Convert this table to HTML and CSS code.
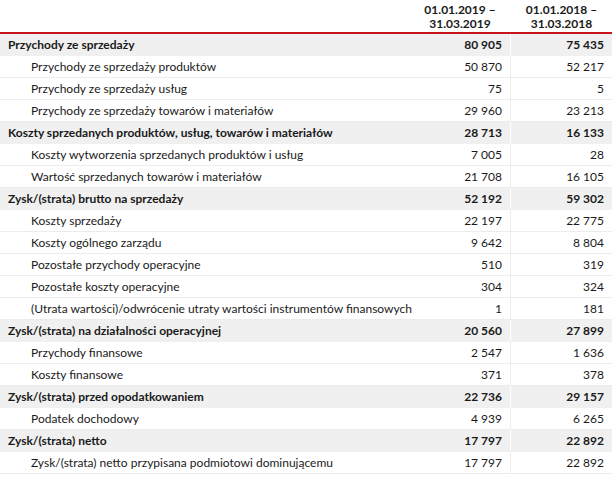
FILE: index.html
```html
<!DOCTYPE html>
<html lang="pl">
<head>
<meta charset="utf-8">
<link rel="stylesheet" href="styles.css">
</head>
<body>
<div class="table">
  <div class="row head">
    <div class="cell label"></div>
    <div class="cell num">01.01.2019 –<br>31.03.2019</div>
    <div class="cell num last">01.01.2018 –<br>31.03.2018</div>
  </div>
  <div class="row total"><div class="cell label">Przychody ze sprzedaży</div><div class="cell num">80 905</div><div class="cell num last">75 435</div></div>
  <div class="row sub"><div class="cell label">Przychody ze sprzedaży produktów</div><div class="cell num">50 870</div><div class="cell num last">52 217</div></div>
  <div class="row sub"><div class="cell label">Przychody ze sprzedaży usług</div><div class="cell num">75</div><div class="cell num last">5</div></div>
  <div class="row sub"><div class="cell label">Przychody ze sprzedaży towarów i materiałów</div><div class="cell num">29 960</div><div class="cell num last">23 213</div></div>
  <div class="row total"><div class="cell label">Koszty sprzedanych produktów, usług, towarów i materiałów</div><div class="cell num">28 713</div><div class="cell num last">16 133</div></div>
  <div class="row sub"><div class="cell label">Koszty wytworzenia sprzedanych produktów i usług</div><div class="cell num">7 005</div><div class="cell num last">28</div></div>
  <div class="row sub"><div class="cell label">Wartość sprzedanych towarów i materiałów</div><div class="cell num">21 708</div><div class="cell num last">16 105</div></div>
  <div class="row total"><div class="cell label">Zysk/(strata) brutto na sprzedaży</div><div class="cell num">52 192</div><div class="cell num last">59 302</div></div>
  <div class="row sub"><div class="cell label">Koszty sprzedaży</div><div class="cell num">22 197</div><div class="cell num last">22 775</div></div>
  <div class="row sub"><div class="cell label">Koszty ogólnego zarządu</div><div class="cell num">9 642</div><div class="cell num last">8 804</div></div>
  <div class="row sub"><div class="cell label">Pozostałe przychody operacyjne</div><div class="cell num">510</div><div class="cell num last">319</div></div>
  <div class="row sub"><div class="cell label">Pozostałe koszty operacyjne</div><div class="cell num">304</div><div class="cell num last">324</div></div>
  <div class="row sub"><div class="cell label">(Utrata wartości)/odwrócenie utraty wartości instrumentów finansowych</div><div class="cell num">1</div><div class="cell num last">181</div></div>
  <div class="row total"><div class="cell label">Zysk/(strata) na działalności operacyjnej</div><div class="cell num">20 560</div><div class="cell num last">27 899</div></div>
  <div class="row sub"><div class="cell label">Przychody finansowe</div><div class="cell num">2 547</div><div class="cell num last">1 636</div></div>
  <div class="row sub"><div class="cell label">Koszty finansowe</div><div class="cell num">371</div><div class="cell num last">378</div></div>
  <div class="row total"><div class="cell label">Zysk/(strata) przed opodatkowaniem</div><div class="cell num">22 736</div><div class="cell num last">29 157</div></div>
  <div class="row sub"><div class="cell label">Podatek dochodowy</div><div class="cell num">4 939</div><div class="cell num last">6 265</div></div>
  <div class="row total"><div class="cell label">Zysk/(strata) netto</div><div class="cell num">17 797</div><div class="cell num last">22 892</div></div>
  <div class="row sub"><div class="cell label">Zysk/(strata) netto przypisana podmiotowi dominującemu</div><div class="cell num">17 797</div><div class="cell num last">22 892</div></div>
</div>
</body>
</html>
```
FILE: styles.css
```css
html, body {
  margin: 0;
  padding: 0;
  background: #ffffff;
}
body {
  font-family: Lato, "Open Sans", sans-serif;
  font-size: 12px;
  color: #1a1a1a;
  overflow: hidden;
}
.table {
  width: 612px;
}
.row {
  display: grid;
  grid-template-columns: 410px 100px 102px;
  height: 22px;
  box-sizing: border-box;
  border-bottom: 1px solid #ececec;
}
.cell {
  display: flex;
  align-items: center;
  padding: 0 8px;
  white-space: nowrap;
  box-sizing: border-box;
}
.num {
  justify-content: flex-end;
}
.num.last {
  border-left: 1px solid #ececec;
}
.head {
  height: 34px;
  border-bottom: 2px solid #c9141e;
  font-weight: 700;
  line-height: 14px;
}
.head .cell {
  justify-content: center;
  text-align: center;
  padding-top: 2px;
}
.head .num.last {
  border-left: 1px solid #ffffff;
}
.total {
  background: #f0f0f0;
  font-weight: 700;
  border-bottom-color: #f0f0f0;
}
.total .num.last {
  border-left-color: #ffffff;
}
.sub .label {
  padding-left: 31px;
}
```
